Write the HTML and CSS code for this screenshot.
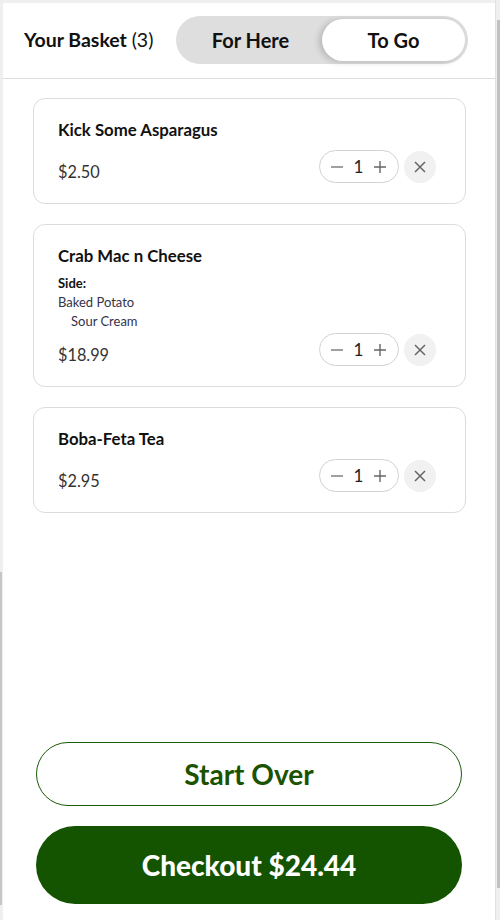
FILE: index.html
```html
<!DOCTYPE html>
<html lang="en">
<head>
<meta charset="utf-8">
<title>Your Basket</title>
<link rel="stylesheet" href="styles.css">
</head>
<body>
<div class="frame">
  <div class="lbar"><div class="lthumb"></div></div>
  <div class="panel">
    <header class="header">
      <h1 class="title">Your Basket <span class="count">(3)</span></h1>
      <div class="toggle">
        <button class="opt">For Here</button>
        <button class="opt active">To Go</button>
      </div>
    </header>
    <main class="items">
      <div class="card">
        <div class="name">Kick Some Asparagus</div>
        <div class="row">
          <div class="price">$2.50</div>
          <div class="controls">
            <div class="qty">
              <svg class="ic" width="14" height="14" viewBox="0 0 14 14"><path d="M1 7h12" stroke="#777" stroke-width="1.4"/></svg>
              <span class="num">1</span>
              <svg class="ic" width="14" height="14" viewBox="0 0 14 14"><path d="M1 7h12M7 1v12" stroke="#666" stroke-width="1.4"/></svg>
            </div>
            <div class="remove"><svg width="14" height="14" viewBox="0 0 14 14"><path d="M2 2l10 10M12 2L2 12" stroke="#666" stroke-width="1.5"/></svg></div>
          </div>
        </div>
      </div>
      <div class="card">
        <div class="name">Crab Mac n Cheese</div>
        <div class="options">
          <div class="opt-label">Side:</div>
          <div class="opt-val">Baked Potato</div>
          <div class="opt-val sub">Sour Cream</div>
        </div>
        <div class="row">
          <div class="price">$18.99</div>
          <div class="controls">
            <div class="qty">
              <svg class="ic" width="14" height="14" viewBox="0 0 14 14"><path d="M1 7h12" stroke="#777" stroke-width="1.4"/></svg>
              <span class="num">1</span>
              <svg class="ic" width="14" height="14" viewBox="0 0 14 14"><path d="M1 7h12M7 1v12" stroke="#666" stroke-width="1.4"/></svg>
            </div>
            <div class="remove"><svg width="14" height="14" viewBox="0 0 14 14"><path d="M2 2l10 10M12 2L2 12" stroke="#666" stroke-width="1.5"/></svg></div>
          </div>
        </div>
      </div>
      <div class="card">
        <div class="name">Boba-Feta Tea</div>
        <div class="row">
          <div class="price">$2.95</div>
          <div class="controls">
            <div class="qty">
              <svg class="ic" width="14" height="14" viewBox="0 0 14 14"><path d="M1 7h12" stroke="#777" stroke-width="1.4"/></svg>
              <span class="num">1</span>
              <svg class="ic" width="14" height="14" viewBox="0 0 14 14"><path d="M1 7h12M7 1v12" stroke="#666" stroke-width="1.4"/></svg>
            </div>
            <div class="remove"><svg width="14" height="14" viewBox="0 0 14 14"><path d="M2 2l10 10M12 2L2 12" stroke="#666" stroke-width="1.5"/></svg></div>
          </div>
        </div>
      </div>
    </main>
    <footer class="footer">
      <button class="btn outline">Start Over</button>
      <button class="btn solid">Checkout $24.44</button>
    </footer>
  </div>
  <div class="rbar"><div class="rthumb"></div></div>
</div>
</body>
</html>
```
FILE: styles.css
```css
* { box-sizing: border-box; }
html, body { margin: 0; padding: 0; }
body {
  background: #efefef;
  font-family: "Lato", "Noto Sans", sans-serif;
  color: #111;
}
.frame {
  display: flex;
  height: 920px;
  padding-top: 3px;
}
.lbar {
  width: 3px;
  background: #efefef;
  display: flex;
  flex-direction: column;
}
.lthumb {
  margin-top: 569px;
  height: 333px;
  width: 2px;
  background: #c6c6c6;
}
.rbar {
  width: 5px;
  margin-top: -3px;
  background: #efefef;
  border-left: 1px solid #e2e2e2;
  padding-top: 20px;
  padding-left: 1px;
}
.rthumb {
  height: 868px;
  background: #c1c1c1;
}
.panel {
  flex: 1;
  background: #fff;
  display: flex;
  flex-direction: column;
}
.header {
  height: 76px;
  border-bottom: 1px solid #dedede;
  display: flex;
  align-items: center;
  justify-content: space-between;
  padding: 0 27px 1px 21px;
}
.title {
  margin: 0;
  font-size: 19.5px;
  line-height: 24px;
  font-weight: 700;
  color: #111;
}
.count { font-weight: 400; }
.toggle {
  width: 292px;
  height: 48px;
  border-radius: 24px;
  background: #dedede;
  padding: 3px;
  display: flex;
}
.opt {
  flex: 1;
  border: 0;
  background: transparent;
  font-family: inherit;
  font-size: 20px;
  font-weight: 700;
  color: #111;
  border-radius: 21px;
  padding: 0;
}
.opt.active {
  background: #fff;
  box-shadow: -3px 1px 6px rgba(0,0,0,0.18);
}
.items {
  flex: 1;
  padding: 19px 29px 0 30px;
  display: flex;
  flex-direction: column;
  gap: 20px;
}
.card {
  border: 1px solid #dcdcdc;
  border-radius: 12px;
  padding: 21px 29px 20px 24px;
}
.name {
  font-size: 16.8px;
  font-weight: 700;
  line-height: 20px;
  color: #111;
  margin-bottom: 10px;
}
.options {
  margin-top: -2px;
  margin-bottom: 2px;
  font-size: 13px;
  line-height: 19px;
  color: #33334a;
}
.opt-label { font-weight: 700; color: #111; }
.opt-val.sub { padding-left: 13px; }
.row {
  display: flex;
  justify-content: space-between;
  align-items: flex-end;
}
.price {
  font-size: 16.3px;
  color: #333;
  line-height: 20px;
  margin-bottom: 1px;
}
.controls {
  display: flex;
  align-items: center;
  gap: 5px;
}
.qty {
  width: 80px;
  height: 33px;
  border: 1px solid #d2d2d2;
  border-radius: 17px;
  display: flex;
  align-items: center;
  justify-content: space-between;
  padding: 0 11px 0 10px;
}
.ic { display: block; }
.num { font-size: 17px; color: #222; }
.remove {
  width: 32px;
  height: 32px;
  border-radius: 50%;
  background: #f1f1f1;
  display: flex;
  align-items: center;
  justify-content: center;
}
.footer {
  display: flex;
  flex-direction: column;
  gap: 20px;
  padding: 0 33px 16px 33px;
}
.btn {
  width: 100%;
  border-radius: 40px;
  font-family: inherit;
  font-size: 28px;
  font-weight: 700;
  padding: 0;
}
.btn.outline {
  height: 64px;
  background: #fff;
  border: 1px solid #1b5a08;
  color: #1a5200;
}
.btn.solid {
  height: 78px;
  background: #145300;
  border: 0;
  color: #fff;
  font-weight: 900;
}
```
